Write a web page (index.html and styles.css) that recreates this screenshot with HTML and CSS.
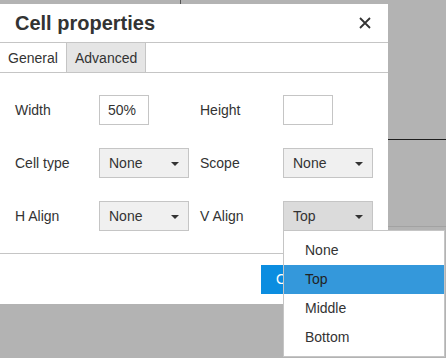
FILE: index.html
```html
<!DOCTYPE html>
<html>
<head>
    <title>Cell properties</title>
    <link rel="stylesheet" href="styles.css">
</head>
<body>
    <div class="page-lines">
        <div class="line-v"></div>
        <div class="line-h"></div>
        <div class="line-h light"></div>
    </div>

    <div class="dialog">
        <div class="dialog-head">
            <h2>Cell properties</h2>
            <button class="close" title="Close">
                <svg width="12" height="12" viewBox="0 0 12 12">
                    <path d="M1 1 L11 11 M11 1 L1 11" stroke="#333" stroke-width="1.8" fill="none"/>
                </svg>
            </button>
        </div>
        <div class="tabs">
            <div class="tab active">General</div>
            <div class="tab">Advanced</div>
        </div>
        <div class="form-grid">
            <label>Width</label>
            <div><input class="text-input" type="text" value="50%"></div>
            <label>Height</label>
            <div><input class="text-input" type="text"></div>

            <label>Cell type</label>
            <div class="select-box">None<span class="caret"></span></div>
            <label>Scope</label>
            <div class="select-box">None<span class="caret"></span></div>

            <label>H Align</label>
            <div class="select-box">None<span class="caret"></span></div>
            <label>V Align</label>
            <div class="select-box open">Top<span class="caret"></span></div>
        </div>
        <div class="dialog-foot">
            <button class="btn primary">Ok</button>
            <button class="btn">Cancel</button>
        </div>
    </div>

    <div class="menu">
        <div class="menu-item">None</div>
        <div class="menu-item selected">Top</div>
        <div class="menu-item">Middle</div>
        <div class="menu-item">Bottom</div>
    </div>
</body>
</html>
```

FILE: styles.css
```css
body {
    margin: 0;
    width: 446px;
    height: 358px;
    overflow: hidden;
    background-color: #b3b3b3;
    font-family: "Liberation Sans", Arial, sans-serif;
    font-size: 14px;
    color: #333;
    position: relative;
}
/* table lines of the page behind the modal */
.line-v {
    position: absolute;
    left: 180px;
    top: 0;
    width: 1px;
    height: 4px;
    background-color: #555;
}
.line-h {
    position: absolute;
    left: 388px;
    top: 139px;
    width: 58px;
    height: 1px;
    background-color: #1e1e1e;
}
.line-h.light {
    top: 226px;
    background-color: #a2a2a2;
}
.dialog {
    position: absolute;
    left: 0;
    top: 4px;
    width: 388px;
    height: 300px;
    background-color: #fff;
    display: flex;
    flex-direction: column;
}
.dialog-head {
    height: 38px;
    border-bottom: 1px solid #c5c5c5;
    display: flex;
    align-items: center;
    justify-content: space-between;
    padding: 0 17px 0 15px;
}
.dialog-head h2 {
    margin: 0;
    font-size: 20px;
    font-weight: bold;
    color: #333;
}
.close {
    border: none;
    background: none;
    padding: 0;
    width: 12px;
    height: 12px;
    display: block;
}
.close svg {
    display: block;
}
.tabs {
    display: flex;
    height: 29px;
    border-bottom: 1px solid #c5c5c5;
}
.tab {
    padding: 2px 8px 0;
    line-height: 27px;
    color: #333;
}
.tab.active {
    background-color: #fff;
    width: 50px;
}
.tab:not(.active) {
    background-color: #e5e5e5;
    border-left: 1px solid #c5c5c5;
    border-right: 1px solid #c5c5c5;
}
.form-grid {
    display: grid;
    grid-template-columns: 84px 101px 83px 90px;
    grid-auto-rows: 30px;
    row-gap: 23px;
    padding: 22px 0 0 15px;
    flex: 1;
    align-content: start;
}
.form-grid label {
    display: flex;
    align-items: center;
    color: #333;
}
.text-input {
    width: 50px;
    height: 30px;
    box-sizing: border-box;
    border: 1px solid #c5c5c5;
    padding: 0 8px;
    font-family: inherit;
    font-size: 14px;
    color: #333;
    margin: 0;
}
.select-box {
    height: 30px;
    box-sizing: border-box;
    width: 90px;
    border: 1px solid #c5c5c5;
    background-color: #f0f0f0;
    padding-left: 9px;
    display: flex;
    align-items: center;
    position: relative;
    color: #333;
}
.select-box.open {
    background-color: #dbdbdb;
}
.caret {
    position: absolute;
    right: 9px;
    top: 13px;
    width: 0;
    height: 0;
    border-left: 4px solid transparent;
    border-right: 4px solid transparent;
    border-top: 4px solid #333;
}
.dialog-foot {
    height: 50px;
    border-top: 1px solid #c5c5c5;
    display: flex;
    align-items: center;
    padding-left: 261px;
    gap: 6px;
}
.btn {
    height: 29px;
    padding: 0 14px;
    border: 1px solid #b1b1b1;
    background-color: #f0f0f0;
    font-family: inherit;
    font-size: 14px;
    color: #333;
}
.btn.primary {
    background-color: #0b8de0;
    border-color: #0b8de0;
    color: #fff;
}
.menu {
    position: absolute;
    left: 283px;
    top: 230px;
    width: 160px;
    border: 1px solid #c5c5c5;
    background-color: #fff;
    padding: 5px 0 4px;
}
.menu-item {
    height: 29px;
    line-height: 29px;
    padding-left: 21px;
    color: #333;
}
.menu-item.selected {
    background-color: #3498db;
    color: #222;
}
```
